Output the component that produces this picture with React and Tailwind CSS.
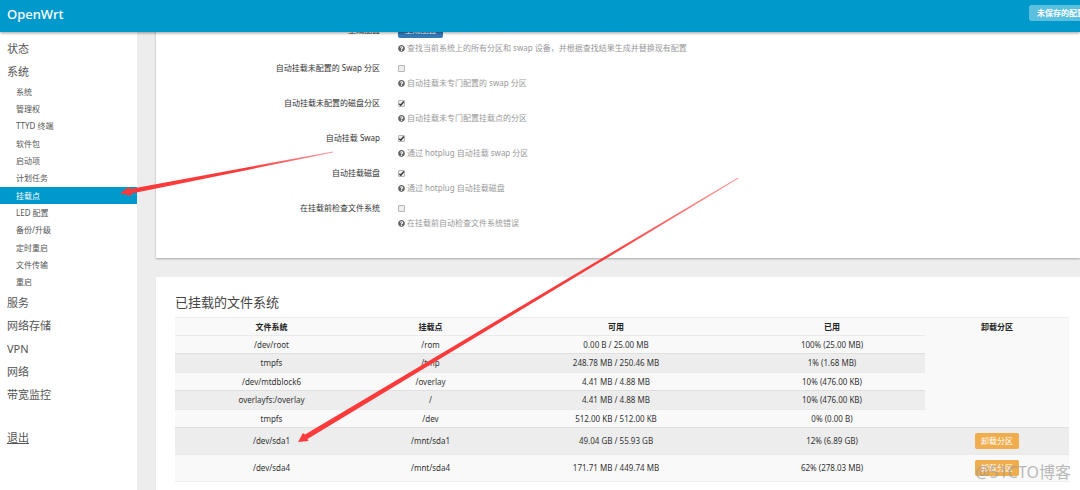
import { useState } from 'react';
import { FaQuestionCircle } from 'react-icons/fa';

// main menu: only the "system" group is open
const SUB_MENU = [
  '系统',
  '管理权',
  'TTYD 终端',
  '软件包',
  '启动项',
  '计划任务',
  '挂载点',
  'LED 配置',
  '备份/升级',
  '定时重启',
  '文件传输',
  '重启',
];

const MENU_TOP = ['状态', '系统'];
const MENU_BOTTOM = ['服务', '网络存储', 'VPN', '网络', '带宽监控'];

const OPTIONS = [
  { id: 'anon_swap', label: '自动挂载未配置的 Swap 分区', help: '自动挂载未专门配置的 swap 分区', on: false },
  { id: 'anon_mount', label: '自动挂载未配置的磁盘分区', help: '自动挂载未专门配置挂载点的分区', on: true },
  { id: 'auto_swap', label: '自动挂载 Swap', help: '通过 hotplug 自动挂载 swap 分区', on: true },
  { id: 'auto_mount', label: '自动挂载磁盘', help: '通过 hotplug 自动挂载磁盘', on: true },
  { id: 'check_fs', label: '在挂载前检查文件系统', help: '在挂载前自动检查文件系统错误', on: false },
];

const MOUNTS = [
  { fs: '/dev/root', point: '/rom', free: '0.00 B / 25.00 MB', used: '100% (25.00 MB)' },
  { fs: 'tmpfs', point: '/tmp', free: '248.78 MB / 250.46 MB', used: '1% (1.68 MB)' },
  { fs: '/dev/mtdblock6', point: '/overlay', free: '4.41 MB / 4.88 MB', used: '10% (476.00 KB)' },
  { fs: 'overlayfs:/overlay', point: '/', free: '4.41 MB / 4.88 MB', used: '10% (476.00 KB)' },
  { fs: 'tmpfs', point: '/dev', free: '512.00 KB / 512.00 KB', used: '0% (0.00 B)' },
  { fs: '/dev/sda1', point: '/mnt/sda1', free: '49.04 GB / 55.93 GB', used: '12% (6.89 GB)', umount: true },
  { fs: '/dev/sda4', point: '/mnt/sda4', free: '171.71 MB / 449.74 MB', used: '62% (278.03 MB)', umount: true },
];

function MenuLink({ children }) {
  return (
    <a href="#" className="flex h-[23px] items-center pl-[7px] text-[11px]">
      {children}
    </a>
  );
}

function Sidebar() {
  return (
    <nav className="w-[137px] shrink-0 bg-white pt-[5px] text-[#555]">
      {MENU_TOP.map((name) => (
        <MenuLink key={name}>{name}</MenuLink>
      ))}
      <ul className="grid h-52 auto-rows-fr">
        {SUB_MENU.map((name) => (
          <li key={name} className="flex">
            <a
              href="#"
              className={
                name === '挂载点'
                  ? 'flex flex-1 items-center bg-[#0099cc] pl-4 text-white'
                  : 'flex flex-1 items-center pl-4'
              }
            >
              {name}
            </a>
          </li>
        ))}
      </ul>
      {MENU_BOTTOM.map((name) => (
        <MenuLink key={name}>{name}</MenuLink>
      ))}
      <div className="mt-5 underline">
        <MenuLink>退出</MenuLink>
      </div>
    </nav>
  );
}

function Help({ children }) {
  return (
    <p className="mb-[5px] flex h-3 items-center gap-[2px] text-[#999]">
      <FaQuestionCircle className="size-[7px] text-[#666]" />
      {children}
    </p>
  );
}

function OptionRow({ option }) {
  const [checked, setChecked] = useState(option.on);

  return (
    <div className="flex gap-[18px]">
      <label htmlFor={option.id} className="flex h-[18px] w-[224px] shrink-0 items-center justify-end">
        {option.label}
      </label>
      <div>
        <div className="flex h-[18px] items-center">
          <input
            id={option.id}
            type="checkbox"
            checked={checked}
            onChange={() => setChecked(!checked)}
            className="peer size-[7px] appearance-none rounded-[1px] border border-[#b5b5b5] bg-[#eee]"
          />
          <svg viewBox="0 0 8 8" className="pointer-events-none -ml-[7px] hidden size-[7px] peer-checked:block">
            <path d="M1.5 4.2 3.2 6 6.7 1.7" fill="none" stroke="#333" strokeWidth="1.5" />
          </svg>
        </div>
        <Help>{option.help}</Help>
      </div>
    </div>
  );
}

function MountTable() {
  return (
    <table className="w-full table-fixed border-b border-[#eee] bg-[#f9f9f9] text-center">
      <colgroup>
        <col className="w-[193px]" />
        <col className="w-[125px]" />
        <col className="w-[246px]" />
        <col className="w-[186px]" />
        <col className="w-[144px]" />
      </colgroup>
      <thead>
        <tr className="h-[18px] border-t border-[#eee] text-[#222]">
          {['文件系统', '挂载点', '可用', '已用', '卸载分区'].map((name) => (
            <th key={name} className="p-0">{name}</th>
          ))}
        </tr>
      </thead>
      <tbody>
        {MOUNTS.map((m, i) => {
          const cell = i % 2 ? 'border-t border-[#e0e0e0] bg-[#ededed] p-0' : 'border-t border-[#eaeaea] p-0';
          const height = m.umount ? 'h-[27px]' : i % 2 ? 'h-[19px]' : 'h-[18px]';
          return (
            <tr key={m.fs + m.point} className={height}>
              <td className={cell}>{m.fs}</td>
              <td className={cell}>{m.point}</td>
              <td className={cell}>{m.free}</td>
              <td className={cell}>{m.used}</td>
              {m.umount && (
                <td className={cell}>
                  <button type="button" className="h-4 w-11 rounded-[2px] bg-[#f0ad4e] text-white">
                    卸载分区
                  </button>
                </td>
              )}
            </tr>
          );
        })}
      </tbody>
    </table>
  );
}

// red pointers drawn over the page
function Arrows() {
  return (
    <svg className="pointer-events-none absolute top-0 left-0 z-20" width="1080" height="490">
      <defs>
        <linearGradient id="fade1" gradientUnits="userSpaceOnUse" x1="120" y1="193" x2="333" y2="152">
          <stop offset="0.6" stopColor="#fb3b3b" />
          <stop offset="1" stopColor="#fb3b3b" stopOpacity="0.5" />
        </linearGradient>
        <linearGradient id="fade2" gradientUnits="userSpaceOnUse" x1="298" y1="442" x2="738" y2="178">
          <stop offset="0.7" stopColor="#fb3b3b" />
          <stop offset="1" stopColor="#fb3b3b" stopOpacity="0.5" />
        </linearGradient>
      </defs>
      <path d="M120 193 129 187 130 189 333 151.500 333 152.500 131.500 193.500 131 196Z" fill="url(#fade1)" />
      <path d="M298 442 303 433 305 434.500 738 177.500 738.500 178.500 307.500 439 308.500 441Z" fill="url(#fade2)" />
    </svg>
  );
}

export default function App() {
  return (
    <div className="relative flex h-screen flex-col overflow-hidden bg-[#ededed] font-['Noto_Sans','Noto_Sans_CJK_SC',sans-serif] text-[8px] leading-3 text-[#333]">
      <header className="z-10 flex h-8 shrink-0 justify-between bg-[#0099cc] pl-[7px] text-white shadow-[0_1px_3px_rgba(0,0,0,0.4)]">
        <a href="#" className="pt-[5px] text-[13px] leading-[18px] font-medium">OpenWrt</a>
        <button type="button" className="mt-[5px] flex h-4 w-[51px] items-center overflow-hidden rounded-l-[2px] bg-[#5bc0de] pl-2 font-bold whitespace-nowrap">
          未保存的配置
        </button>
      </header>

      <div className="flex min-h-0 flex-1">
        <Sidebar />
        <main className="min-w-0 flex-1 pl-[19px]">
          {/* the page is scrolled, this card starts under the header */}
          <section className="-mt-[10px] bg-white pb-6 shadow-[0_1px_2px_rgba(0,0,0,0.3)]">
            <div className="flex gap-[18px]">
              <span className="flex h-4 w-[224px] shrink-0 items-center justify-end">生成配置</span>
              <div>
                <button type="button" className="mb-1 block h-4 w-[45px] rounded-[2px] bg-[#337ab7] text-white">
                  生成配置
                </button>
                <Help>查找当前系统上的所有分区和 swap 设备，并根据查找结果生成并替换现有配置</Help>
              </div>
            </div>
            {OPTIONS.map((option) => (
              <OptionRow key={option.id} option={option} />
            ))}
          </section>

          <section className="mt-[19px] h-full bg-white pt-4 pr-[11px] pl-[19px] shadow-[0_1px_1px_rgba(0,0,0,0.1)]">
            <h3 className="mb-[6px] text-[13px] leading-[18px] text-[#444]">已挂载的文件系统</h3>
            <MountTable />
          </section>
        </main>
      </div>

      <Arrows />
      <span className="absolute right-[9px] bottom-[9px] z-20 text-[16px] leading-[18px] text-[#999]/70">@51CTO博客</span>
    </div>
  );
}
